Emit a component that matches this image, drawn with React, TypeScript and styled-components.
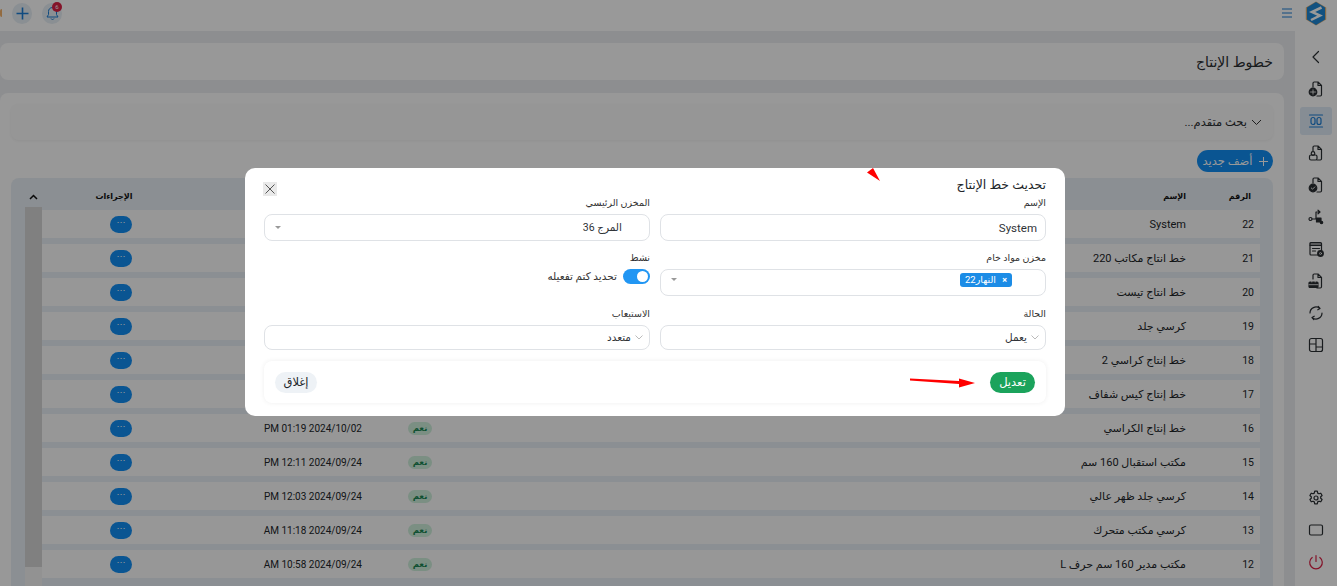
import React from 'react';
import styled, { createGlobalStyle } from 'styled-components';

const GlobalStyle = createGlobalStyle`
  html, body {
    margin: 0;
    padding: 0;
    background: #fff;
  }
  * {
    box-sizing: border-box;
  }
`;

const FONT = 'Roboto, "Noto Sans", "DejaVu Sans", "Liberation Sans", sans-serif';

const Page = styled.div`
  position: relative;
  width: 1337px;
  height: 586px;
  overflow: hidden;
  display: flex;
  flex-direction: column;
  background: #fff;
  color: #212529;
  font-family: ${FONT};
`;

const TopBar = styled.header`
  height: 31px;
  flex: none;
  display: flex;
  align-items: center;
  padding: 0 10px 5px 0;
  background: #fff;
`;

const Logo = styled.svg`
  width: 22px;
  height: 25px;
  flex: none;
`;

const MenuIcon = styled.svg`
  width: 12px;
  height: 12px;
  margin-right: 12px;
  flex: none;
`;

const TopActions = styled.div`
  margin-right: auto;
  display: flex;
  align-items: center;
  gap: 10px;
`;

const RoundAction = styled.div`
  position: relative;
  width: 20px;
  height: 21px;
  border-radius: 50%;
  background: #e6eef5;
  display: flex;
  align-items: center;
  justify-content: center;
`;

const Badge = styled.span`
  position: absolute;
  top: -1px;
  right: 0;
  width: 10px;
  height: 10px;
  border-radius: 50%;
  background: #dc2045;
  color: #fff;
  font-size: 6px;
  line-height: 10px;
  text-align: center;
`;

const AvatarEdge = styled.div`
  width: 2px;
  height: 8px;
  margin-right: 10px;
  background: #f5b26b;
  border-radius: 2px 0 0 2px;
  align-self: center;
`;

const Shell = styled.div`
  flex: 1;
  min-height: 0;
  display: flex;
  direction: rtl;
`;

const Sidebar = styled.nav`
  width: 42px;
  flex: none;
  display: flex;
  flex-direction: column;
  align-items: center;
  padding-top: 12px;
  background: #fff;
`;

const NavItem = styled.div<{ $active?: boolean }>`
  width: 32px;
  height: 28px;
  margin-bottom: 4px;
  border-radius: 3px;
  display: flex;
  align-items: center;
  justify-content: center;
  background: ${({ $active }) => ($active ? '#dfebf7' : 'transparent')};
  color: ${({ $active }) => ($active ? '#1c7ed6' : '#2b2f33')};
`;

const NavFooter = styled.div`
  margin-top: auto;
  padding-bottom: 6px;
  display: flex;
  flex-direction: column;
`;

const Content = styled.main`
  flex: 1;
  min-width: 0;
  display: flex;
  flex-direction: column;
  gap: 13px;
  padding: 12px 11px 0 0;
  background: #ebedf0;
`;

const TitleCard = styled.section`
  height: 37px;
  flex: none;
  display: flex;
  align-items: center;
  padding: 0 11px;
  background: #fdfdfd;
  border-radius: 8px;
`;

const PageTitle = styled.h1`
  margin: 0;
  font-size: 14px;
  font-weight: 400;
  color: #2a2d31;
`;

const ListCard = styled.section`
  flex: 1;
  min-height: 0;
  display: flex;
  flex-direction: column;
  padding: 11px 11px 0;
  background: #fdfdfd;
  border-radius: 8px 8px 0 0;
`;

const SearchBar = styled.div`
  height: 36px;
  flex: none;
  display: flex;
  align-items: center;
  gap: 4px;
  padding: 0 11px;
  border-radius: 8px;
  background: #fbfbfb;
  box-shadow: 0 1px 3px rgba(0, 0, 0, 0.05);
  font-size: 11.5px;
  color: #2a2d31;
`;

const ToolRow = styled.div`
  height: 22px;
  margin-top: 10px;
  flex: none;
  display: flex;
`;

const AddButton = styled.button`
  width: 76px;
  height: 22px;
  padding: 0;
  display: flex;
  align-items: center;
  justify-content: center;
  gap: 6px;
  border: 0;
  border-radius: 11px;
  background: #118ef3;
  color: #fff;
  font-family: inherit;
  font-size: 11.5px;
  white-space: nowrap;
  direction: rtl;
`;

const TableCard = styled.div`
  flex: 1;
  min-height: 0;
  margin-top: 6px;
  display: flex;
  padding: 0 13px 0 14px;
  background: #e8eff5;
  border-radius: 8px 8px 0 0;
`;

const TableBody = styled.div`
  flex: 1;
  min-width: 0;
`;

const columns = '74px 1fr 70px 162px 158px';

const HeadRow = styled.div`
  height: 32px;
  padding-top: 5px;
  display: grid;
  grid-template-columns: ${columns};
  align-items: center;
  font-size: 8px;
  font-weight: 700;
  color: #111;
`;

const Row = styled.div`
  height: 28px;
  margin-bottom: 6px;
  display: grid;
  grid-template-columns: ${columns};
  align-items: center;
  background: #fcfcfc;
  font-size: 11px;
  color: #212529;
`;

const NumberCell = styled.div`
  padding-right: 6px;
  font-size: 10.5px;
`;

const HeadNumberCell = styled.div`
  padding-right: 9px;
`;

const ActionsHead = styled.div`
  grid-column: 5;
  text-align: center;
  padding-right: 14px;
`;

const StatusCell = styled.div`
  display: flex;
`;

const YesBadge = styled.span`
  width: 24px;
  height: 13px;
  border-radius: 7px;
  background: #cdeedb;
  color: #198754;
  font-size: 8.5px;
  font-weight: 700;
  line-height: 13px;
  text-align: center;
`;

const DateCell = styled.div`
  direction: rtl;
  white-space: nowrap;
  font-size: 10px;
`;

const ActionCell = styled.div`
  display: flex;
  justify-content: center;
`;

const DotsButton = styled.button`
  width: 22px;
  height: 17px;
  padding: 0 0 4px;
  border: 0;
  border-radius: 9px;
  background: #118ef3;
  color: #fff;
  font-size: 9px;
  line-height: 13px;
`;

const ScrollRail = styled.div`
  width: 17px;
  flex: none;
  display: flex;
  flex-direction: column;
  background: #f3f3f3;
`;

const RailArrow = styled.div`
  height: 29px;
  padding-top: 9px;
  flex: none;
  display: flex;
  align-items: center;
  justify-content: center;
  background: #e8eff5;
`;

const RailThumb = styled.div`
  height: 360px;
  flex: none;
  background: #d5d5d5;
`;

const Overlay = styled.div`
  position: absolute;
  inset: 0;
  padding: 168px 0 0 245px;
  background: rgba(0, 0, 0, 0.4);
`;

const Modal = styled.div`
  position: relative;
  width: 820px;
  height: 248px;
  padding: 10px 19px 0;
  background: #fff;
  border-radius: 10px;
  direction: rtl;
`;

const ModalHead = styled.div`
  height: 20px;
  display: flex;
  align-items: flex-start;
  justify-content: space-between;
`;

const ModalTitle = styled.h2`
  margin: 0;
  font-size: 12.5px;
  font-weight: 400;
  line-height: 14px;
  color: #212529;
`;

const CloseButton = styled.button`
  width: 14px;
  height: 14px;
  margin: 4px 0 0 -1px;
  padding: 0;
  border: 0;
  display: flex;
  align-items: center;
  justify-content: center;
  background: #e9e9e9;
  color: #555;
`;

const FormGrid = styled.div`
  display: grid;
  grid-template-columns: 386px 386px;
  column-gap: 10px;
`;

const Field = styled.div<{ $height: number }>`
  height: ${({ $height }) => $height}px;
  display: flex;
  flex-direction: column;
`;

const Label = styled.label`
  height: 16px;
  font-size: 9.5px;
  line-height: 10px;
  color: #333;
`;

const Control = styled.div<{ $height: number; $raised?: boolean }>`
  height: ${({ $height }) => $height}px;
  display: flex;
  align-items: center;
  justify-content: space-between;
  padding: 0 8px ${({ $raised }) => ($raised ? 6 : 0)}px;
  border: 1px solid #dfe2e6;
  border-radius: 8px;
  background: #fff;
  font-size: 11.5px;
  color: #2f3337;
`;

const SelectText = styled.span<{ $inset?: number }>`
  margin-right: ${({ $inset }) => $inset ?? 0}px;
  display: flex;
  align-items: center;
  gap: 4px;
  font-size: 10.5px;
`;

const Caret = styled.span`
  width: 0;
  height: 0;
  margin-left: 2px;
  border: 3px solid transparent;
  border-top: 3.5px solid #999;
  border-bottom: 0;
`;

const Tag = styled.span`
  margin-right: 25px;
  height: 14px;
  width: 52px;
  display: flex;
  align-items: center;
  justify-content: space-between;
  padding: 0 5px;
  border-radius: 3px;
  background: #1c8ce6;
  color: #fff;
  font-size: 9.5px;
`;

const TagRemove = styled.span`
  font-size: 9px;
  font-weight: 700;
`;

const ToggleRow = styled.div`
  display: flex;
  align-items: center;
  gap: 6px;
  height: 14px;
  font-size: 10.5px;
  color: #333;
`;

const Toggle = styled.span`
  width: 27px;
  height: 15px;
  padding: 2px 2px 2px 0;
  display: flex;
  justify-content: flex-end;
  border-radius: 8px;
  background: #2196f3;
  direction: ltr;
`;

const Knob = styled.span`
  width: 11px;
  height: 11px;
  border-radius: 50%;
  background: #fff;
`;

const ModalFooter = styled.div`
  position: relative;
  height: 42px;
  margin-top: 11px;
  display: flex;
  align-items: center;
  justify-content: space-between;
  padding: 0 11px;
  border-radius: 8px;
  background: #fff;
  box-shadow: 0 0 5px rgba(0, 0, 0, 0.07);
`;

const PillButton = styled.button<{ $primary?: boolean }>`
  height: 21px;
  padding: 0;
  width: ${({ $primary }) => ($primary ? 45 : 42)}px;
  border: 0;
  border-radius: 11px;
  background: ${({ $primary }) => ($primary ? '#1ba35c' : '#eef2f6')};
  color: ${({ $primary }) => ($primary ? '#fff' : '#212529')};
  font-family: inherit;
  font-size: 11.5px;
`;

const RedArrow = styled.svg`
  position: absolute;
  top: 17px;
  right: 70px;
  width: 66px;
  height: 10px;
`;

const RedPointer = styled.svg`
  position: absolute;
  top: 0;
  left: 622px;
  width: 14px;
  height: 14px;
`;

type IconProps = { children: React.ReactNode; size?: number };

const NavSvg = ({ children, size = 18 }: IconProps) => (
  <svg width={size} height={size} viewBox="0 0 18 18" fill="none" stroke="currentColor" strokeWidth="1.2" strokeLinecap="round" strokeLinejoin="round">
    {children}
  </svg>
);

const Doc = () => <path d="M6 7V3.2C6 2.5 6.5 2 7.2 2H11l3.5 3.5v9.3c0 .7-.5 1.2-1.2 1.2H10M11 2v3.5h3.5" />;

const rows: [string, string, string, string][] = [
  ['22', 'System', '', ''],
  ['21', 'خط انتاج مكاتب 220', '', ''],
  ['20', 'خط انتاج تيست', '', ''],
  ['19', 'كرسي جلد', '', ''],
  ['18', 'خط إنتاج كراسي 2', '', ''],
  ['17', 'خط إنتاج كيس شفاف', '', ''],
  ['16', 'خط إنتاج الكراسي', 'PM 01:19 2024/10/02', 'yes'],
  ['15', 'مكتب استقبال 160 سم', 'PM 12:11 2024/09/24', 'yes'],
  ['14', 'كرسي جلد ظهر عالي', 'PM 12:03 2024/09/24', 'yes'],
  ['13', 'كرسي مكتب متحرك', 'AM 11:18 2024/09/24', 'yes'],
  ['12', 'مكتب مدير 160 سم حرف L', 'AM 10:58 2024/09/24', 'yes'],
];

export default function App() {
  return (
    <>
      <GlobalStyle />
      <Page>
        <TopBar>
          <AvatarEdge />
          <TopActions>
            <RoundAction>
              <svg width="13" height="13" viewBox="0 0 13 13" stroke="#1c7ed6" strokeWidth="1.6"><path d="M6.500 0.500v12M0.500 6.500h12" /></svg>
            </RoundAction>
            <RoundAction>
              <svg width="13" height="15" viewBox="0 0 13 15" fill="none" stroke="#1c7ed6" strokeWidth="1"><path d="M6.500 1.500c-2.500 0-4 1.800-4 4v3L1 11h11l-1.500-2.500v-3c0-2.200-1.500-4-4-4zM5 12.500c.3 1.300 2.700 1.300 3 0" /></svg>
              <Badge>6</Badge>
            </RoundAction>
          </TopActions>
          <MenuIcon viewBox="0 0 12 12" stroke="#1c7ed6" strokeWidth="1"><path d="M1 2h10M1 6h10M1 10h10" /></MenuIcon>
          <Logo viewBox="0 0 22 25">
            <path d="M0.800 6.500 11 0.500 21.200 6.500v12L11 24.500 0.800 18.500z" fill="#e0b27a" />
            <path d="M2 6.500 11 1l9 5.500v12L11 24l-9-5.500z" fill="#1f88d6" />
            <path d="M16.500 6.500 7 11l8 3.500-9 4.500" fill="none" stroke="#fff" strokeWidth="2.500" />
          </Logo>
        </TopBar>
        <Shell>
          <Sidebar>
            <NavItem>
              <NavSvg><path d="M11.500 3.500 6 9l5.500 5.500" /></NavSvg>
            </NavItem>
            <NavItem>
              <NavSvg><Doc /><circle cx="6" cy="12" r="3.800" fill="currentColor" /><path d="M3.500 12h5M6 9.800v4.400" stroke="#fff" strokeWidth="0.800" /></NavSvg>
            </NavItem>
            <NavItem $active>
              <NavSvg><path d="M2.500 3h13M2.500 15h13" /><rect x="4" y="5.500" width="4" height="7" rx="2" /><rect x="10" y="5.500" width="4" height="7" rx="2" /></NavSvg>
            </NavItem>
            <NavItem>
              <NavSvg><Doc /><circle cx="6" cy="9.500" r="1.800" /><rect x="2.500" y="11" width="7.500" height="5" rx="1.500" /></NavSvg>
            </NavItem>
            <NavItem>
              <NavSvg><Doc /><circle cx="6" cy="12" r="3.800" fill="currentColor" /><path d="M4.300 12l1.200 1.200 2.300-2.300" stroke="#fff" strokeWidth="0.900" /></NavSvg>
            </NavItem>
            <NavItem>
              <NavSvg><circle cx="3.500" cy="11" r="1.500" /><path d="M5 11h4V4h3.500M11 2.200 13 4l-2 1.800" /><rect x="9.500" y="10" width="4.500" height="4" fill="currentColor" /><circle cx="14.500" cy="14.500" r="1.200" fill="currentColor" /></NavSvg>
            </NavItem>
            <NavItem>
              <NavSvg><rect x="3" y="2.500" width="11.500" height="12.500" rx="1" /><path d="M3 4h11.500M3 5.500h11.500M5.500 8.500h7M5.500 11h3" /><circle cx="13.500" cy="13.500" r="2.800" fill="currentColor" /><circle cx="13.500" cy="13.500" r="1" stroke="#fff" strokeWidth="0.700" /></NavSvg>
            </NavItem>
            <NavItem>
              <NavSvg><Doc /><rect x="2" y="10" width="9" height="5.500" rx="1" fill="currentColor" /><path d="M4.800 10V8.500h3.400V10M2 12.700h9" stroke="#fff" strokeWidth="0.800" /></NavSvg>
            </NavItem>
            <NavItem>
              <NavSvg><path d="M3 9a6 6 0 0 1 9.800-4.600M15 9a6 6 0 0 1-9.800 4.600M11.200 2.500l1.800 2-2.200 1.300M6.800 15.500l-1.800-2 2.200-1.300" /></NavSvg>
            </NavItem>
            <NavItem>
              <NavSvg><rect x="2.500" y="2.500" width="13" height="13" rx="2" /><path d="M9 2.500v13M2.500 8h6.500M9 11h6.500" /></NavSvg>
            </NavItem>
            <NavFooter>
              <NavItem>
                <NavSvg><circle cx="9" cy="9" r="2" /><path d="M7.700 2.200h2.600l.4 1.900 1.300.7 1.800-.6 1.300 2.300-1.400 1.300v1.400l1.400 1.300-1.300 2.300-1.800-.6-1.300.7-.4 1.900H7.700l-.4-1.900-1.300-.7-1.800.6-1.300-2.300 1.400-1.300V7.800L2.900 6.500l1.300-2.300 1.800.6 1.300-.7z" /></NavSvg>
              </NavItem>
              <NavItem>
                <NavSvg><rect x="2.500" y="4" width="13" height="10" rx="1.500" /></NavSvg>
              </NavItem>
              <NavItem>
                <svg width="18" height="18" viewBox="0 0 18 18" fill="none" stroke="#dc2045" strokeWidth="1.200" strokeLinecap="round"><path d="M9 2.500v6M5.200 4.500a6.300 6.300 0 1 0 7.600 0" /></svg>
              </NavItem>
            </NavFooter>
          </Sidebar>
          <Content>
            <TitleCard>
              <PageTitle>خطوط الإنتاج</PageTitle>
            </TitleCard>
            <ListCard>
              <SearchBar>
                <svg width="11" height="7" viewBox="0 0 11 7" fill="none" stroke="#333"><path d="M1 1l4.500 4.500L10 1" /></svg>
                بحث متقدم...
              </SearchBar>
              <ToolRow>
                <AddButton>
                  <svg width="9" height="9" viewBox="0 0 9 9" stroke="#fff"><path d="M4.500 0v9M0 4.500h9" /></svg>
                  أضف جديد
                </AddButton>
              </ToolRow>
              <TableCard>
                <TableBody>
                  <HeadRow>
                    <HeadNumberCell>الرقم</HeadNumberCell>
                    <div>الإسم</div>
                    <ActionsHead>الإجراءات</ActionsHead>
                  </HeadRow>
                  {rows.map(([id, name, date, status]) => (
                    <Row key={id}>
                      <NumberCell>{id}</NumberCell>
                      <div>{name}</div>
                      <StatusCell>{status && <YesBadge>نعم</YesBadge>}</StatusCell>
                      <DateCell>{date}</DateCell>
                      <ActionCell><DotsButton>···</DotsButton></ActionCell>
                    </Row>
                  ))}
                </TableBody>
                <ScrollRail>
                  <RailArrow>
                    <svg width="9" height="6" viewBox="0 0 9 6" fill="none" stroke="#111" strokeWidth="1.500"><path d="M1 5l3.500-3.500L8 5" /></svg>
                  </RailArrow>
                  <RailThumb />
                </ScrollRail>
              </TableCard>
            </ListCard>
          </Content>
        </Shell>
        <Overlay>
          <Modal>
            <RedPointer viewBox="0 0 14 14"><path d="M0 4.500 6 0 13 13z" fill="#f00" /></RedPointer>
            <ModalHead>
              <ModalTitle>تحديث خط الإنتاج</ModalTitle>
              <CloseButton>
                <svg width="10" height="10" viewBox="0 0 10 10" stroke="currentColor"><path d="M0.500 0.500l9 9M9.500 0.500l-9 9" /></svg>
              </CloseButton>
            </ModalHead>
            <FormGrid>
              <Field $height={55}>
                <Label>الإسم</Label>
                <Control $height={27}>System</Control>
              </Field>
              <Field $height={55}>
                <Label>المخزن الرئيسي</Label>
                <Control $height={27}>
                  <SelectText $inset={19}>المرج 36</SelectText>
                  <Caret />
                </Control>
              </Field>
              <Field $height={56}>
                <Label>مخزن مواد خام</Label>
                <Control $height={27} $raised>
                  <Tag><TagRemove>×</TagRemove>النهار22</Tag>
                  <Caret />
                </Control>
              </Field>
              <Field $height={56}>
                <Label>نشط</Label>
                <ToggleRow>
                  <Toggle><Knob /></Toggle>
                  تحديد كتم تفعيله
                </ToggleRow>
              </Field>
              <Field $height={41}>
                <Label>الحالة</Label>
                <Control $height={25}>
                  <SelectText $inset={-2}>
                    <svg width="8" height="5" viewBox="0 0 8 5" fill="none" stroke="#bbb"><path d="M0.500 0.500 4 4l3.500-3.500" /></svg>
                    يعمل
                  </SelectText>
                </Control>
              </Field>
              <Field $height={41}>
                <Label>الاستيعاب</Label>
                <Control $height={25}>
                  <SelectText $inset={-2}>
                    <svg width="8" height="5" viewBox="0 0 8 5" fill="none" stroke="#bbb"><path d="M0.500 0.500 4 4l3.500-3.500" /></svg>
                    متعدد
                  </SelectText>
                </Control>
              </Field>
            </FormGrid>
            <ModalFooter>
              <PillButton $primary>تعديل</PillButton>
              <RedArrow viewBox="0 0 66 10"><path d="M0 0.500 49 3V0.500L65 5 49 9.500V6L0 2.500z" fill="#f00" /></RedArrow>
              <PillButton>إغلاق</PillButton>
            </ModalFooter>
          </Modal>
        </Overlay>
      </Page>
    </>
  );
}
